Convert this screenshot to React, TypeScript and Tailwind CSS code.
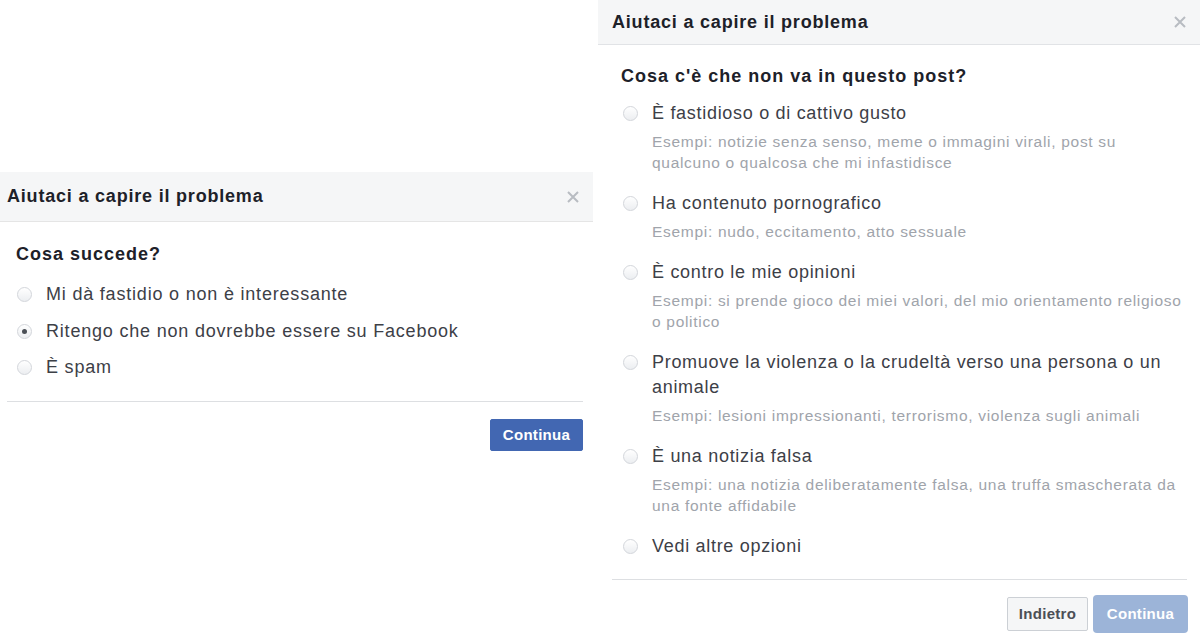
import React from "react";

const font = "font-['Liberation_Sans',Arial,sans-serif]";

function Radio({ checked = false }: { checked?: boolean }) {
  return (
    <span className="flex h-[15px] w-[15px] shrink-0 items-center justify-center rounded-full border border-[#d3d6db] bg-gradient-to-b from-[#ffffff] to-[#eceef1]">
      {checked && <span className="h-[5px] w-[5px] rounded-full bg-[#4b4f56]" />}
    </span>
  );
}

function CloseIcon() {
  return (
    <svg width="12" height="12" viewBox="0 0 12 12">
      <path d="M1 1 L11 11 M11 1 L1 11" stroke="#b8bcc2" strokeWidth="2" />
    </svg>
  );
}

const options = [
  {
    title: "È fastidioso o di cattivo gusto",
    desc: "Esempi: notizie senza senso, meme o immagini virali, post su qualcuno o qualcosa che mi infastidisce",
  },
  {
    title: "Ha contenuto pornografico",
    desc: "Esempi: nudo, eccitamento, atto sessuale",
  },
  {
    title: "È contro le mie opinioni",
    desc: "Esempi: si prende gioco dei miei valori, del mio orientamento religioso o politico",
  },
  {
    title: "Promuove la violenza o la crudeltà verso una persona o un animale",
    desc: "Esempi: lesioni impressionanti, terrorismo, violenza sugli animali",
  },
  {
    title: "È una notizia falsa",
    desc: "Esempi: una notizia deliberatamente falsa, una truffa smascherata da una fonte affidabile",
  },
  { title: "Vedi altre opzioni", desc: "" },
];

export default function App() {
  return (
    <div className={`flex h-[639px] w-[1200px] overflow-hidden bg-white text-[#1d2129] ${font}`}>
      {/* Left dialog */}
      <div className="w-[598px] shrink-0 pt-[172px]">
        <div className="flex h-[50px] w-[593px] items-center justify-between border-b border-[#e5e5e5] bg-[#f5f6f7] pl-[7px] pr-[14px]">
          <span className="text-[18px] font-bold tracking-[0.8px]">Aiutaci a capire il problema</span>
          <CloseIcon />
        </div>
        <div className="pl-[16px] pt-[20px] text-[18px] font-bold leading-[24px] tracking-[1px]">Cosa succede?</div>
        <div className="mt-[16px] flex flex-col gap-[11.5px] pl-[17px]">
          {[
            "Mi dà fastidio o non è interessante",
            "Ritengo che non dovrebbe essere su Facebook",
            "È spam",
          ].map((t, i) => (
            <div key={i} className="flex items-center gap-[14px] text-[18px] leading-[25px] tracking-[0.8px] text-[#3d4047]">
              <Radio checked={i === 1} />
              <span>{t}</span>
            </div>
          ))}
        </div>
        <div className="ml-[7px] mt-[21px] h-px w-[576px] bg-[#dddfe2]" />
        <div className="flex w-[583px] justify-end pt-[17px]">
          <button className="h-[32px] w-[93px] rounded-[2px] border border-[#4267b2] bg-[#4267b2] text-[15px] font-bold tracking-[0.3px] text-white">
            Continua
          </button>
        </div>
      </div>

      {/* Right dialog */}
      <div className="flex-1">
        <div className="flex h-[45px] items-center justify-between border-b border-[#e1e3e6] bg-[#f5f6f7] pl-[14px] pr-[14px]">
          <span className="text-[18px] font-bold tracking-[0.8px]">Aiutaci a capire il problema</span>
          <CloseIcon />
        </div>
        <div className="pl-[23px] pt-[19px] text-[18px] font-bold leading-[24px] tracking-[1px]">
          Cosa c'è che non va in questo post?
        </div>
        <div className="mt-[13px] flex flex-col gap-[18px] pl-[25px] pr-[14px]">
          {options.map((o, i) => (
            <div key={i} className="flex items-start gap-[14px]">
              <div className="pt-[5px]">
                <Radio />
              </div>
              <div className="flex flex-col">
                <span className="text-[18px] leading-[25px] tracking-[0.7px] text-[#3d4047]">{o.title}</span>
                {o.desc && (
                  <span className="mt-[5px] text-[15.5px] leading-[21px] tracking-[0.7px] text-[#a0a4ab]">{o.desc}</span>
                )}
              </div>
            </div>
          ))}
        </div>
        <div className="ml-[14px] mt-[20px] h-px w-[575px] bg-[#dddfe2]" />
        <div className="flex w-[590px] items-center justify-end gap-[5px] pt-[15px]">
          <button className="h-[34px] w-[81px] rounded-[2px] border border-[#ccd0d5] bg-[#f5f6f7] text-[15px] font-bold tracking-[0.3px] text-[#4b4f56]">
            Indietro
          </button>
          <button className="h-[38px] w-[95px] rounded-[4px] bg-[#9cb4d8] text-[15px] font-bold tracking-[0.3px] text-white">
            Continua
          </button>
        </div>
      </div>
    </div>
  );
}
